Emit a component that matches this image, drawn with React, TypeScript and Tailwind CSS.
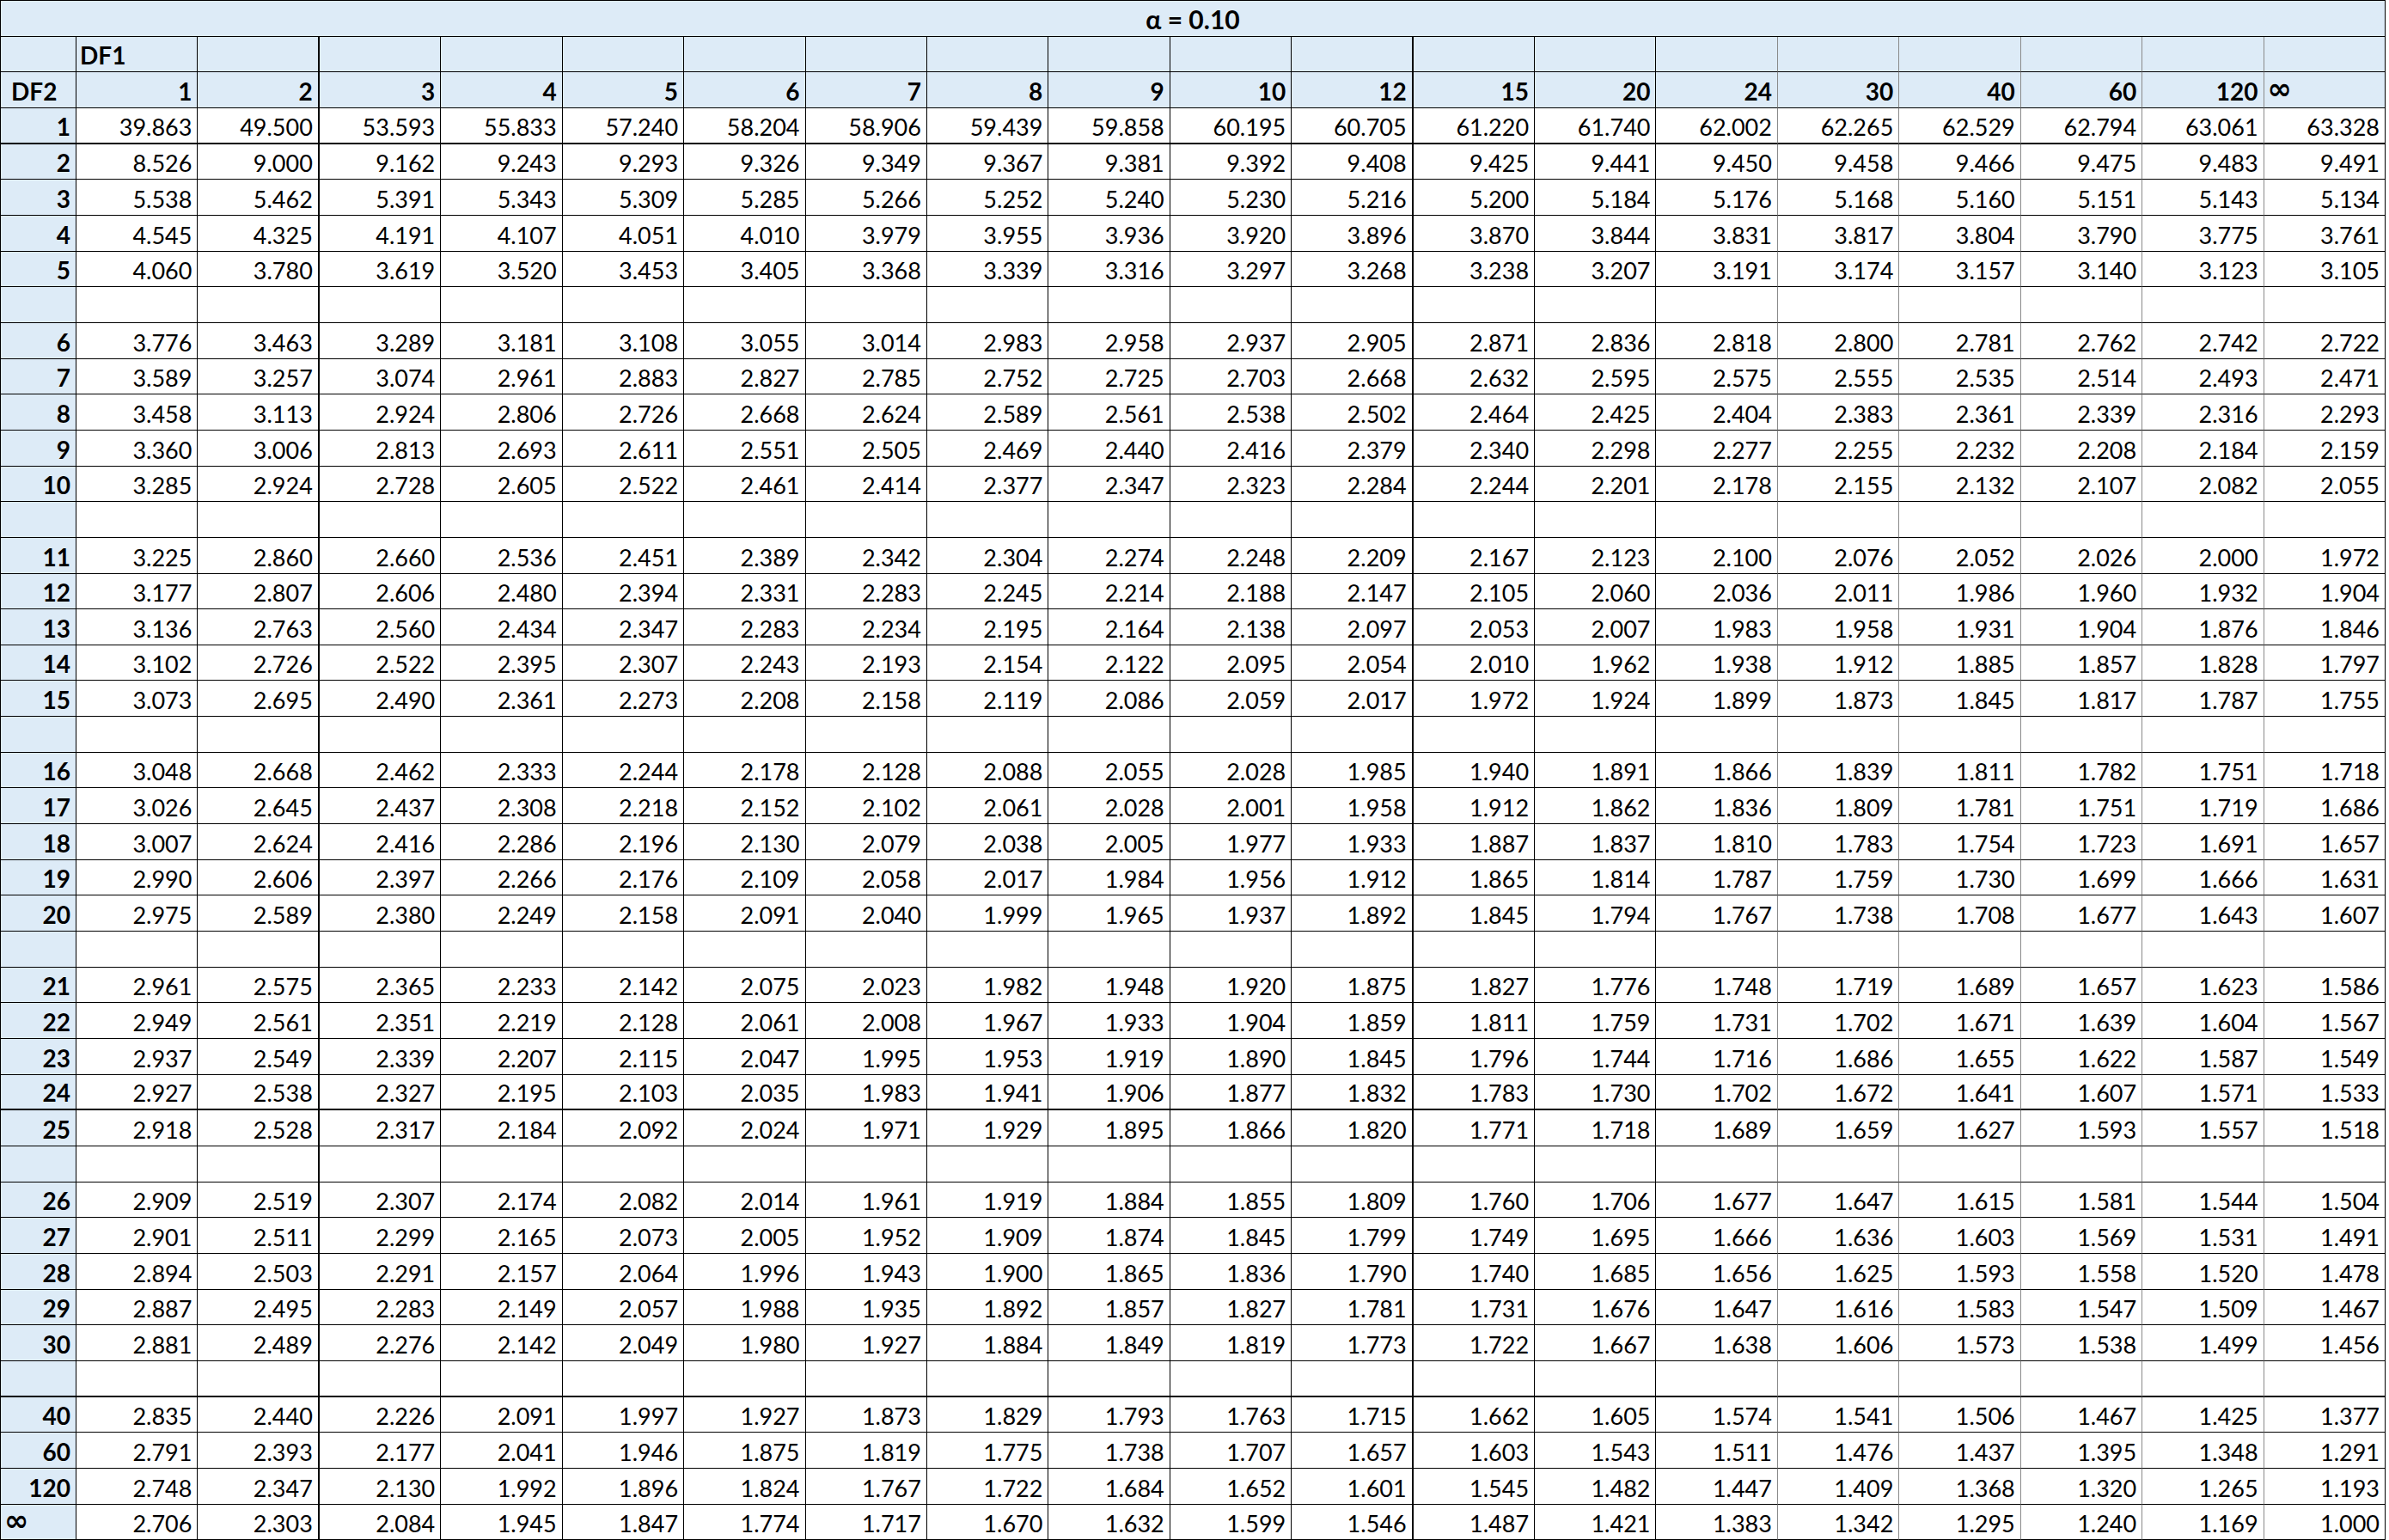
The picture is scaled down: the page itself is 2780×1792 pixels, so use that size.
import React from 'react';

const COLS = ['1', '2', '3', '4', '5', '6', '7', '8', '9', '10', '12', '15', '20', '24', '30', '40', '60', '120', '∞'];

type Row = { label: string; values: string[] | null; thick?: boolean };

const raw: [string, string][] = [
  ['1', '39.863 49.500 53.593 55.833 57.240 58.204 58.906 59.439 59.858 60.195 60.705 61.220 61.740 62.002 62.265 62.529 62.794 63.061 63.328'],
  ['2', '8.526 9.000 9.162 9.243 9.293 9.326 9.349 9.367 9.381 9.392 9.408 9.425 9.441 9.450 9.458 9.466 9.475 9.483 9.491'],
  ['3', '5.538 5.462 5.391 5.343 5.309 5.285 5.266 5.252 5.240 5.230 5.216 5.200 5.184 5.176 5.168 5.160 5.151 5.143 5.134'],
  ['4', '4.545 4.325 4.191 4.107 4.051 4.010 3.979 3.955 3.936 3.920 3.896 3.870 3.844 3.831 3.817 3.804 3.790 3.775 3.761'],
  ['5', '4.060 3.780 3.619 3.520 3.453 3.405 3.368 3.339 3.316 3.297 3.268 3.238 3.207 3.191 3.174 3.157 3.140 3.123 3.105'],
  ['', ''],
  ['6', '3.776 3.463 3.289 3.181 3.108 3.055 3.014 2.983 2.958 2.937 2.905 2.871 2.836 2.818 2.800 2.781 2.762 2.742 2.722'],
  ['7', '3.589 3.257 3.074 2.961 2.883 2.827 2.785 2.752 2.725 2.703 2.668 2.632 2.595 2.575 2.555 2.535 2.514 2.493 2.471'],
  ['8', '3.458 3.113 2.924 2.806 2.726 2.668 2.624 2.589 2.561 2.538 2.502 2.464 2.425 2.404 2.383 2.361 2.339 2.316 2.293'],
  ['9', '3.360 3.006 2.813 2.693 2.611 2.551 2.505 2.469 2.440 2.416 2.379 2.340 2.298 2.277 2.255 2.232 2.208 2.184 2.159'],
  ['10', '3.285 2.924 2.728 2.605 2.522 2.461 2.414 2.377 2.347 2.323 2.284 2.244 2.201 2.178 2.155 2.132 2.107 2.082 2.055'],
  ['', ''],
  ['11', '3.225 2.860 2.660 2.536 2.451 2.389 2.342 2.304 2.274 2.248 2.209 2.167 2.123 2.100 2.076 2.052 2.026 2.000 1.972'],
  ['12', '3.177 2.807 2.606 2.480 2.394 2.331 2.283 2.245 2.214 2.188 2.147 2.105 2.060 2.036 2.011 1.986 1.960 1.932 1.904'],
  ['13', '3.136 2.763 2.560 2.434 2.347 2.283 2.234 2.195 2.164 2.138 2.097 2.053 2.007 1.983 1.958 1.931 1.904 1.876 1.846'],
  ['14', '3.102 2.726 2.522 2.395 2.307 2.243 2.193 2.154 2.122 2.095 2.054 2.010 1.962 1.938 1.912 1.885 1.857 1.828 1.797'],
  ['15', '3.073 2.695 2.490 2.361 2.273 2.208 2.158 2.119 2.086 2.059 2.017 1.972 1.924 1.899 1.873 1.845 1.817 1.787 1.755'],
  ['', ''],
  ['16', '3.048 2.668 2.462 2.333 2.244 2.178 2.128 2.088 2.055 2.028 1.985 1.940 1.891 1.866 1.839 1.811 1.782 1.751 1.718'],
  ['17', '3.026 2.645 2.437 2.308 2.218 2.152 2.102 2.061 2.028 2.001 1.958 1.912 1.862 1.836 1.809 1.781 1.751 1.719 1.686'],
  ['18', '3.007 2.624 2.416 2.286 2.196 2.130 2.079 2.038 2.005 1.977 1.933 1.887 1.837 1.810 1.783 1.754 1.723 1.691 1.657'],
  ['19', '2.990 2.606 2.397 2.266 2.176 2.109 2.058 2.017 1.984 1.956 1.912 1.865 1.814 1.787 1.759 1.730 1.699 1.666 1.631'],
  ['20', '2.975 2.589 2.380 2.249 2.158 2.091 2.040 1.999 1.965 1.937 1.892 1.845 1.794 1.767 1.738 1.708 1.677 1.643 1.607'],
  ['', ''],
  ['21', '2.961 2.575 2.365 2.233 2.142 2.075 2.023 1.982 1.948 1.920 1.875 1.827 1.776 1.748 1.719 1.689 1.657 1.623 1.586'],
  ['22', '2.949 2.561 2.351 2.219 2.128 2.061 2.008 1.967 1.933 1.904 1.859 1.811 1.759 1.731 1.702 1.671 1.639 1.604 1.567'],
  ['23', '2.937 2.549 2.339 2.207 2.115 2.047 1.995 1.953 1.919 1.890 1.845 1.796 1.744 1.716 1.686 1.655 1.622 1.587 1.549'],
  ['24', '2.927 2.538 2.327 2.195 2.103 2.035 1.983 1.941 1.906 1.877 1.832 1.783 1.730 1.702 1.672 1.641 1.607 1.571 1.533'],
  ['25', '2.918 2.528 2.317 2.184 2.092 2.024 1.971 1.929 1.895 1.866 1.820 1.771 1.718 1.689 1.659 1.627 1.593 1.557 1.518'],
  ['', ''],
  ['26', '2.909 2.519 2.307 2.174 2.082 2.014 1.961 1.919 1.884 1.855 1.809 1.760 1.706 1.677 1.647 1.615 1.581 1.544 1.504'],
  ['27', '2.901 2.511 2.299 2.165 2.073 2.005 1.952 1.909 1.874 1.845 1.799 1.749 1.695 1.666 1.636 1.603 1.569 1.531 1.491'],
  ['28', '2.894 2.503 2.291 2.157 2.064 1.996 1.943 1.900 1.865 1.836 1.790 1.740 1.685 1.656 1.625 1.593 1.558 1.520 1.478'],
  ['29', '2.887 2.495 2.283 2.149 2.057 1.988 1.935 1.892 1.857 1.827 1.781 1.731 1.676 1.647 1.616 1.583 1.547 1.509 1.467'],
  ['30', '2.881 2.489 2.276 2.142 2.049 1.980 1.927 1.884 1.849 1.819 1.773 1.722 1.667 1.638 1.606 1.573 1.538 1.499 1.456'],
  ['', ''],
  ['40', '2.835 2.440 2.226 2.091 1.997 1.927 1.873 1.829 1.793 1.763 1.715 1.662 1.605 1.574 1.541 1.506 1.467 1.425 1.377'],
  ['60', '2.791 2.393 2.177 2.041 1.946 1.875 1.819 1.775 1.738 1.707 1.657 1.603 1.543 1.511 1.476 1.437 1.395 1.348 1.291'],
  ['120', '2.748 2.347 2.130 1.992 1.896 1.824 1.767 1.722 1.684 1.652 1.601 1.545 1.482 1.447 1.409 1.368 1.320 1.265 1.193'],
  ['∞', '2.706 2.303 2.084 1.945 1.847 1.774 1.717 1.670 1.632 1.599 1.546 1.487 1.421 1.383 1.342 1.295 1.240 1.169 1.000'],
];

const rows: Row[] = raw.map(([label, v], i) => ({
  label,
  values: v ? v.split(' ') : null,
  thick: label === '1' || label === '24' || (label === '' && raw[i + 1] && raw[i + 1][0] === '40'),
}));

function rightBorder(c: number): string {
  if (c === 2 || c === 11) return 'border-r-2 border-r-black';
  if (c >= 14 && c <= 18) return 'border-r border-r-[#8a8a8a]';
  return 'border-r border-r-black';
}

function Inf() {
  return <span className="font-['DejaVu_Sans',sans-serif] font-bold text-[34px] leading-none">∞</span>;
}

function Cell({
  c,
  thick,
  blue,
  align,
  bold,
  indent,
  children,
}: {
  c: number;
  thick?: boolean;
  blue?: boolean;
  align: 'left' | 'right';
  bold?: boolean;
  indent?: boolean;
  children?: React.ReactNode;
}) {
  return (
    <div
      className={[
        'h-[41.67px] flex items-end overflow-hidden whitespace-nowrap pb-[5px] leading-none',
        rightBorder(c),
        thick ? 'border-b-2 border-b-black' : 'border-b border-b-black',
        blue ? 'bg-[#ddebf7]' : 'bg-white',
        align === 'right' ? 'justify-end pr-[6px]' : indent ? 'justify-start pl-[12px]' : 'justify-start pl-[4px]',
        bold ? 'font-bold text-[28px]' : 'font-normal text-[27px]',
      ].join(' ')}
    >
      {children}
    </div>
  );
}

export default function App() {
  return (
    <div className="w-[2780px] h-[1792px] bg-white font-['Lato',sans-serif] text-black">
      <div className="w-[2776px] grid grid-cols-[88px_repeat(19,minmax(0,1fr))] border-l border-t border-black">
        <div className="col-span-20 h-[41.67px] flex items-center justify-center bg-[#ddebf7] border-r border-b border-black font-bold text-[30px] leading-none pt-[2px]">
          α = 0.10
        </div>
        <Cell c={0} blue align="left" bold />
        {COLS.map((_, i) => (
          <Cell key={'h1' + i} c={i + 1} blue align="left" bold>
            {i === 0 ? 'DF1' : null}
          </Cell>
        ))}
        <Cell c={0} blue align="left" bold indent>
          DF2
        </Cell>
        {COLS.map((h, i) => (
          <Cell key={'h2' + i} c={i + 1} blue align={h === '∞' ? 'left' : 'right'} bold>
            {h === '∞' ? <Inf /> : h}
          </Cell>
        ))}
        {rows.map((r, ri) => (
          <React.Fragment key={'r' + ri}>
            <Cell c={0} blue align={r.label === '∞' ? 'left' : 'right'} bold thick={r.thick}>
              {r.label === '∞' ? <Inf /> : r.label}
            </Cell>
            {COLS.map((_, i) => (
              <Cell key={'c' + ri + '-' + i} c={i + 1} align="right" thick={r.thick}>
                {r.values ? r.values[i] : null}
              </Cell>
            ))}
          </React.Fragment>
        ))}
      </div>
    </div>
  );
}
